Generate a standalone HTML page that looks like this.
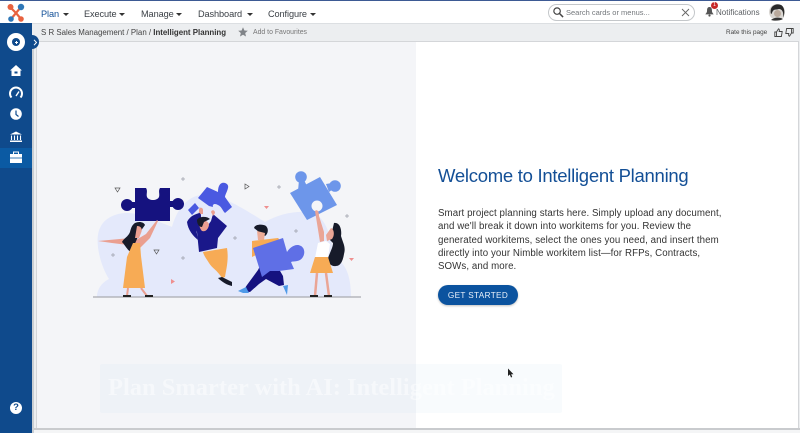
<!DOCTYPE html>
<html><head><meta charset="utf-8"><style>
*{box-sizing:border-box}
html,body{margin:0;padding:0;width:800px;height:433px;overflow:hidden;background:#fff;font-family:"Liberation Sans",sans-serif}
.a{position:absolute;white-space:nowrap}
.nav{top:7px;font-size:9.200px;letter-spacing:-.1px;color:#3a3f45;line-height:14px}
.car{position:absolute;width:0;height:0;border-left:3px solid transparent;border-right:3px solid transparent;border-top:3px solid #333}
</style></head><body>
<div class="a" style="left:0;top:0;width:800px;height:1px;background:#3d5a94"></div>
<div class="a" style="left:0;top:23px;width:800px;height:410px;background:#eceef0"></div>
<div class="a" style="left:0;top:23px;width:800px;height:1px;background:#dcdfe2"></div>
<div class="a" style="left:0;top:23px;width:32px;height:410px;background:#0f4a8c"></div>
<div class="a" style="left:0;top:148px;width:32px;height:20px;background:#0b5aa3"></div>
<div class="a" style="left:32px;top:41px;width:2px;height:392px;background:#c9ced3"></div>

<svg class="a" style="left:6px;top:3px" width="20" height="20" viewBox="0 0 20 20"><path d="M4 4L10 10L15 4M5 16L10 10L15 16" stroke="#e8623f" stroke-width="2.200" fill="none"/><circle cx="4.500" cy="4" r="3" fill="#e8623f"/><circle cx="15" cy="4" r="3.200" fill="#2f78b8"/><circle cx="5" cy="16" r="2.800" fill="#2f78b8"/><circle cx="15" cy="16" r="2.800" fill="#e8623f"/></svg>

<div class="a nav" style="left:41px;color:#114f97">Plan</div><div class="a car" style="left:63px;top:13px"></div>
<div class="a nav" style="left:84px">Execute</div><div class="a car" style="left:119px;top:13px"></div>
<div class="a nav" style="left:141px">Manage</div><div class="a car" style="left:176px;top:13px"></div>
<div class="a nav" style="left:198px">Dashboard</div><div class="a car" style="left:247px;top:13px"></div>
<div class="a nav" style="left:268px">Configure</div><div class="a car" style="left:310px;top:13px"></div>

<div class="a" style="left:548px;top:4px;width:147px;height:17px;border:1px solid #c4c7ca;border-radius:9px"></div>
<svg class="a" style="left:552px;top:6px" width="12" height="12" viewBox="0 0 13 13"><circle cx="5.500" cy="5.500" r="3.500" fill="none" stroke="#444" stroke-width="1.300"/><path d="M8 8L12 12" stroke="#444" stroke-width="1.600"/></svg>
<div class="a" style="left:566px;top:7px;font-size:7.500px;line-height:12px;color:#74787c">Search cards or menus...</div>
<svg class="a" style="left:681px;top:8px" width="9" height="9" viewBox="0 0 9 9"><path d="M1 1L8 8M8 1L1 8" stroke="#666" stroke-width=".9"/></svg>
<svg class="a" style="left:705px;top:6px" width="9" height="11" viewBox="0 0 11 13"><path d="M5.500 1C3 1 2.500 3 2.500 5.500C2.500 8 1 9 .5 10H10.500C10 9 8.500 8 8.500 5.500C8.500 3 8 1 5.500 1Z" fill="#555"/><circle cx="5.500" cy="11.500" r="1.300" fill="#555"/></svg>
<div class="a" style="left:711px;top:2px;width:7px;height:7px;border-radius:50%;background:#c62828;color:#fff;font-size:5px;line-height:7px;text-align:center">1</div>
<div class="a" style="left:716px;top:6px;font-size:8px;line-height:13px;color:#5b5f63">Notifications</div>
<svg class="a" style="left:768px;top:3px" width="18" height="18" viewBox="0 0 18 18"><circle cx="9" cy="9" r="8" fill="#d9d6d2"/><path d="M3 11C1 3 8 0 13 2C17 4 17 11 15 15C16 9 14 6 11 6C8 7 6 6 5 8C4 9 4 11 3 11Z" fill="#2a2a2a"/><path d="M3 17C6 14 12 14 15 16C12 18 6 18 3 17Z" fill="#333"/><circle cx="9.500" cy="10.500" r="3.500" fill="#b9a99c"/></svg>

<div class="a" style="left:41px;top:27px;font-size:7.900px;line-height:12px;color:#444">S R Sales Management / Plan / <b style="color:#333">Intelligent Planning</b></div>
<svg class="a" style="left:238px;top:27px" width="10" height="10" viewBox="0 0 10 10"><path d="M5 .3L6.400 3.500L9.800 3.800L7.200 6L8 9.500L5 7.700L2 9.500L2.800 6L.2 3.800L3.600 3.500Z" fill="#808488"/></svg>
<div class="a" style="left:253px;top:27px;font-size:6.900px;line-height:12px;color:#777">Add to Favourites</div>
<div class="a" style="left:726px;top:27px;font-size:6.400px;line-height:11px;color:#444">Rate this page</div>
<svg class="a" style="left:774px;top:28px" width="9" height="9" viewBox="0 0 9 9"><path d="M.8 4H2.500V8.500H.8ZM2.500 4L4.500 .8C5.500 1 5.500 2 5.200 3.500H8.200L7.400 8.500H2.500" fill="none" stroke="#444" stroke-width=".9"/></svg>
<svg class="a" style="left:785px;top:28px" width="9" height="9" viewBox="0 0 9 9"><path d="M8.200 5H6.500V.5H8.200ZM6.500 5L4.500 8.200C3.500 8 3.500 7 3.800 5.500H.8L1.600 .5H6.500" fill="none" stroke="#444" stroke-width=".9"/></svg>

<div class="a" style="left:36px;top:41px;width:763px;height:388px;background:#fff;border:1px solid #d4d6d9"></div>
<div class="a" style="left:37px;top:42px;width:379px;height:386px;background:#f4f5f8"></div>
<div class="a" style="left:34px;top:428px;width:766px;height:2px;background:#c9cbce"></div>
<div class="a" style="left:34px;top:430px;width:766px;height:3px;background:#f4f5f6"></div>

<div class="a" style="left:7px;top:33px;width:18px;height:18px;border-radius:50%;background:#fff"></div>
<div class="a" style="left:12px;top:38px;width:8px;height:8px;border-radius:50%;background:#0f4a8c"></div>
<div class="a" style="left:14.500px;top:41.500px;width:3px;height:1px;background:#fff"></div>
<div class="a" style="left:15.500px;top:40.500px;width:1px;height:3px;background:#fff"></div>
<div class="a" style="left:32px;top:35px;width:7px;height:14px;border-radius:0 7px 7px 0;background:#0f4a8c"></div>
<svg class="a" style="left:33px;top:39px" width="5" height="7" viewBox="0 0 5 7"><path d="M1 .8L3.500 3.500L1 6.200" fill="none" stroke="#fff" stroke-width="1"/></svg>

<svg class="a" style="left:0;top:60px" width="32" height="110" viewBox="0 0 32 110">
<path d="M16 5L22 10.500H20.500V16H11.500V10.500H10Z" fill="#fff"/><rect x="14.500" y="11.500" width="3" height="2" fill="#0f4a8c"/>
<path d="M11.500 37.500A6 6 0 1 1 20.500 37.500" fill="none" stroke="#fff" stroke-width="2"/><path d="M16 36L19 31.500" stroke="#fff" stroke-width="1.400"/>
<circle cx="16" cy="54" r="5.800" fill="#fff"/><path d="M16 50.500V54.500L18.500 56.500" stroke="#0f4a8c" stroke-width="1.200" fill="none"/>
<path d="M16 71.500L22 74.500H10Z" fill="#fff"/><path d="M11.500 75.500V80M14.500 75.500V80M17.500 75.500V80M20.500 75.500V80" stroke="#fff" stroke-width="1.100"/><rect x="10" y="80.500" width="12" height="1.500" fill="#fff"/>
<path d="M10 94H22V103H10Z" fill="#fff"/><path d="M13.500 94V92H18.500V94" fill="none" stroke="#fff" stroke-width="1"/><path d="M10 98H22" stroke="#0b5aa3" stroke-width=".8"/>
</svg>
<div class="a" style="left:10px;top:402px;width:12px;height:12px;border-radius:50%;background:#fff;color:#0f4a8c;font-size:9.500px;font-weight:bold;line-height:12px;text-align:center">?</div>

<svg class="a" style="left:85px;top:160px" width="285" height="145" viewBox="85 160 285 145">
<path d="M97 297C97 288 103 282 109 279C100 265 94 240 100 228C106 214 125 210 140 215C152 219 165 224 172 227C176 212 185 198 200 195C214 192 232 201 265 222C280 213 300 210 313 213C326 217 332 240 335 257C346 264 351 276 351 297Z" fill="#e4e9fb"/>
<path d="M93 297H361" stroke="#a9abb0" stroke-width="1.200"/>

<!-- dark puzzle -->
<g fill="#15127f"><path d="M135 188H146C148 191 146 194 147 197C149 201 157 201 159 197C160 194 158 191 160 188H170V221H135Z"/><circle cx="127" cy="205" r="6"/><circle cx="178" cy="204" r="6"/><rect x="130" y="202" width="8" height="6"/><rect x="168" y="201" width="8" height="6"/></g>

<!-- blue puzzle -->
<g fill="#4a59e1"><path d="M198 198L207 187L218 192C218 188 219 184 222 183C226 182 229 185 228 188C227 192 225 195 225 197L232 207L225 213C222 210 222 207 218 205C215 203 212 204 213 207L209 206Z"/><path d="M188 210L195 203L199 208L192 215Z"/></g>

<!-- light puzzle -->
<g fill="#6d96ea"><path d="M290 193L320 177L337 205L307 220Z"/><circle cx="301" cy="177" r="5.800"/><path d="M299 180H304L307 186L298 191Z"/><circle cx="335" cy="186" r="5.800"/><path d="M326 184L332 183L333 189L329 192Z"/></g>
<circle cx="317" cy="206" r="5.500" fill="#f4f5f8"/>

<!-- woman left -->
<path d="M98 241L131 238L136 240L146 234L157 220L158 221L150 238L140 248L128 245L112 243Z" fill="#ea9f90"/>
<path d="M135 223C139 221 144 222 145 225L140 232L137 239L133 248L132 253C127 250 125 245 122 242C124 238 128 237 130 232C131 228 132 225 135 223Z" fill="#171b2a"/>
<path d="M137 226C141 226 143 229 141 233L139 238H135L136 232Z" fill="#ea9f90"/>
<path d="M133 243L140 243L141 256L145 288H123L127 257Z" fill="#f7ab55"/>
<path d="M128 288L127 296M141 288L147 296" stroke="#ea9f90" stroke-width="2"/>
<path d="M123 295H131V297H123ZM145 295H153V297H145Z" fill="#222"/>

<!-- flying man -->
<path d="M203 252L227 248C229 260 226 270 225 277L222 278C217 270 212 268 209 263C206 258 204 256 203 252Z" fill="#f7ab55"/>
<path d="M218 278L222 277L232 282V286C227 285 222 282 218 278Z" fill="#171b2a"/>
<path d="M200 207L201 216L192 222L197 232L199 252L217 248L218 238L227 226L213 214L211 221L204 231L197 222Z" fill="#1a188a"/>
<path d="M199 210C199 207 203 207 203 210L203 214H199ZM211 212C212 209 215 210 215 213L213 216Z" fill="#ea9f90"/>
<path d="M187 222C190 216 195 214 200 213L202 220L196 228L198 240C193 236 188 230 187 222Z" fill="#1a188a"/>
<path d="M199 221C203 219 209 221 209 225C208 230 205 232 202 231C200 229 199 226 199 221Z" fill="#ea9f90"/>
<path d="M197 220C199 216 207 216 210 219L204 222L202 227C199 227 197 224 197 220Z" fill="#171b2a"/>

<!-- man with puzzle -->
<path d="M254 228C255 224 263 224 266 226C269 229 268 234 265 236L259 232Z" fill="#171b2a"/>
<path d="M257 231L265 233L264 240H258Z" fill="#ecab96"/>
<path d="M258 270L247 285L243 291L250 292L259 284L266 279L279 286L284 285L283 276L276 264L262 262Z" fill="#15127f"/>
<path d="M252 241L278 238L283 243L280 256L276 252L256 255L252 257Z" fill="#f7ab55"/>
<path d="M253 248L283 238L287 252C290 247 296 243 301 246C306 249 305 257 300 260C296 262 293 261 291 262L294 269L279 271L270 271L262 277Z" fill="#5f6fe6"/>
<path d="M238 291L246 287L249 293L243 293ZM283 286L288 285L287 295Z" fill="#4f9ae8"/>

<!-- right woman -->
<path d="M315 211C317 209 319 211 319 216L324 232L324 241L320 242Z" fill="#eaa596"/>
<path d="M334 223C340 222 342 230 341 236C343 243 346 247 344 254C343 260 341 266 336 266C331 267 327 262 328 258C331 250 333 247 333 243L330 240Z" fill="#171b2a"/>
<path d="M331 228C334 229 335 235 332 239L327 241L326 235Z" fill="#eaa596"/>
<path d="M318 243L326 241L330 244L328 258H315Z" fill="#fff"/>
<path d="M315 257H328L333 273H310Z" fill="#f7ab55"/>
<path d="M317 273L315 296M326 273L329 296" stroke="#eaa596" stroke-width="2.500"/>
<path d="M310 295H318V297H310ZM324 295H332V297H324Z" fill="#222"/>

<g stroke="#9a9da8" stroke-width=".7"><path d="M183 177V181M181 179H185M279 185V189M277 187H281M347 214V218M345 216H349M296 229V233M294 231H298M235 236V240M233 238H237M183 256V260M181 258H185M113 253V257M111 255H115"/></g>
<path d="M115 188H120L117.500 192Z" fill="none" stroke="#555" stroke-width=".7"/>
<path d="M154 250H159L156.500 254Z" fill="none" stroke="#555" stroke-width=".7"/>
<path d="M245 184V189L249 186.500Z" fill="none" stroke="#555" stroke-width=".7"/>
<path d="M171 279L175 281.500L171 284Z" fill="#ef8f8f"/>
<path d="M264 206H269L266.500 209Z" fill="#ef8f8f"/>
<path d="M349 258H354L351.500 261Z" fill="#ef8f8f"/>
</svg>

<div class="a" style="left:438px;top:165px;font-size:18.500px;line-height:22px;color:#134f96;letter-spacing:-.27px">Welcome to Intelligent Planning</div>
<div class="a" style="left:438px;top:207px;font-size:9.700px;line-height:13.300px;color:#333;letter-spacing:.09px">Smart project planning starts here. Simply upload any document,<br>and we'll break it down into workitems for you. Review the<br>generated workitems, select the ones you need, and insert them<br>directly into your Nimble workitem list—for RFPs, Contracts,<br>SOWs, and more.</div>
<div class="a" style="left:438px;top:285px;width:80px;height:20px;border-radius:10px;background:#0b539f;color:#e8f0fa;font-size:8.200px;line-height:21px;text-align:center;letter-spacing:.35px;box-shadow:0 1px 2px rgba(0,0,0,.25)">GET STARTED</div>

<div class="a" style="left:100px;top:364px;width:462px;height:49px;border-radius:2px;background:rgba(200,222,240,.13)"></div>
<div class="a" style="left:108px;top:374px;font-family:'Liberation Serif',serif;font-size:24.500px;font-weight:bold;line-height:28px;color:rgba(255,255,255,.45)">Plan Smarter with AI: Intelligent Planning</div>
<svg class="a" style="left:507px;top:368px" width="8" height="11" viewBox="0 0 8 11"><path d="M1 .5V8L2.800 6.500L4 9.500L5.200 9L4.200 6.200H6.500Z" fill="#222"/></svg>
</body></html>
